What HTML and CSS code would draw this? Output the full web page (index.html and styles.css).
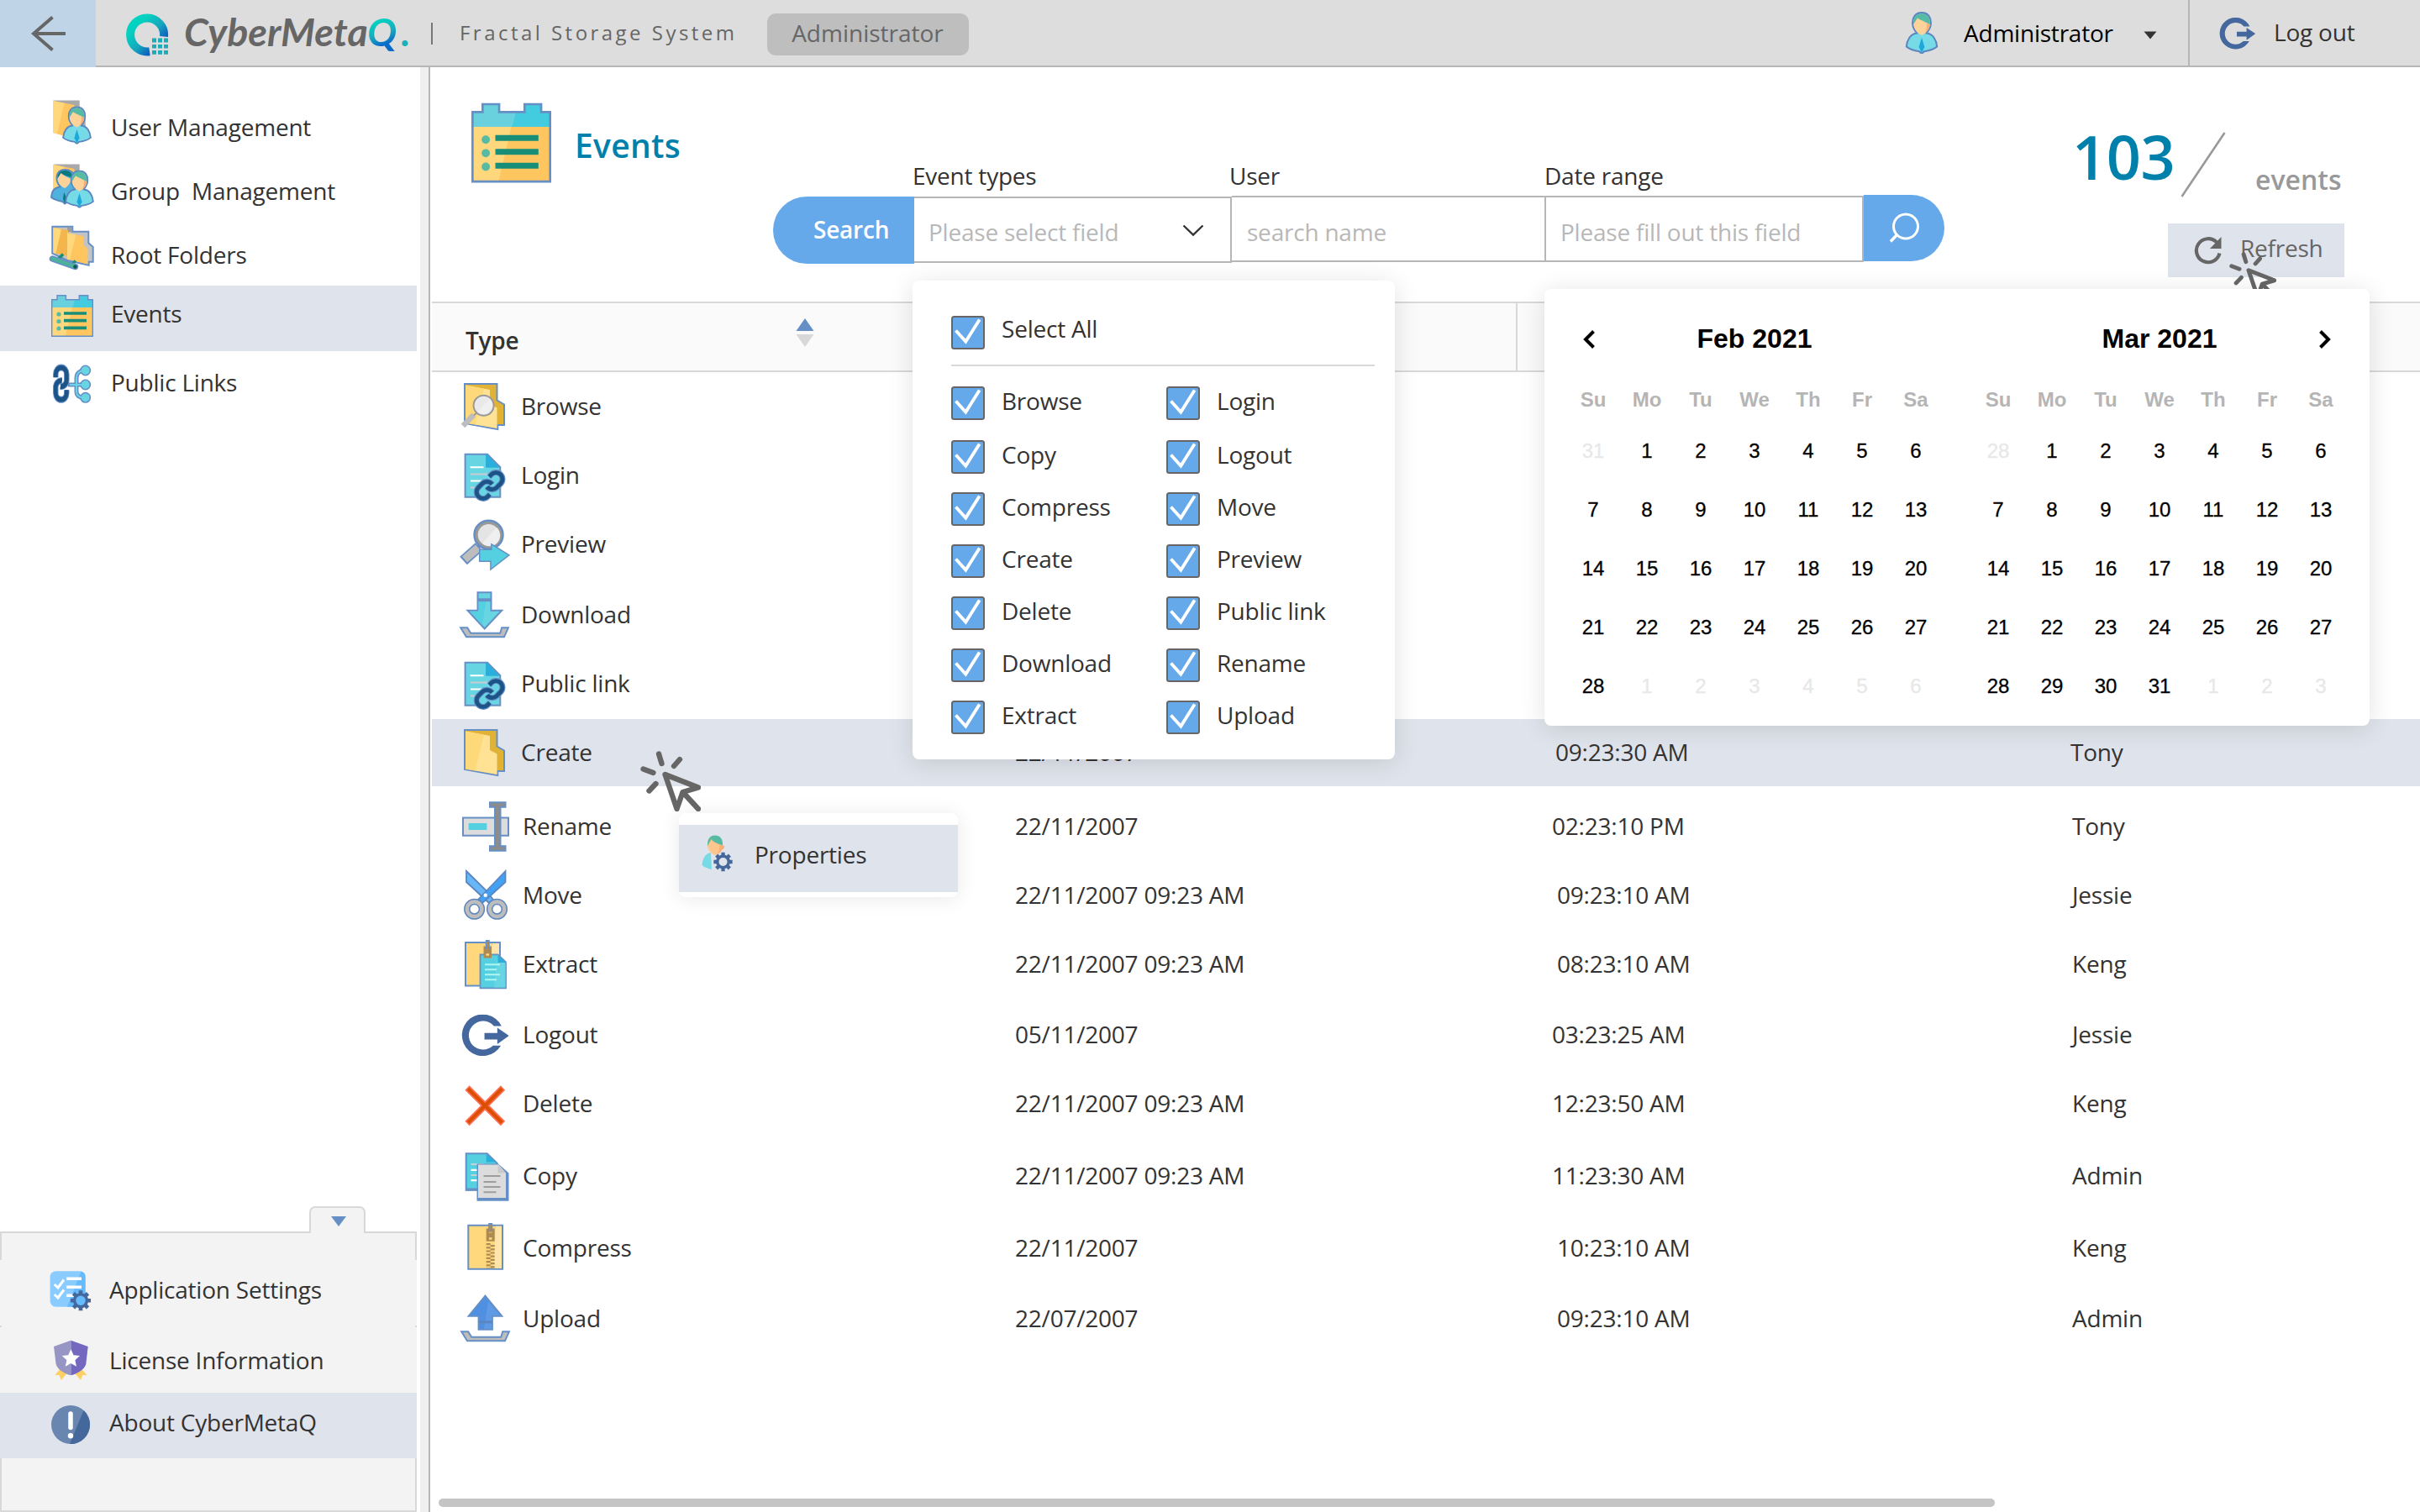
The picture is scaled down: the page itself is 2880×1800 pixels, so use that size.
FILE: index.html
```html
<!DOCTYPE html>
<html lang="en">
<head>
<meta charset="utf-8">
<title>CyberMetaQ - Events</title>
<link rel="stylesheet" href="styles.css">
</head>
<body>

<svg class="defs" aria-hidden="true">
  <defs>
    <linearGradient id="ring" x1="0" y1="0" x2="1" y2="1">
      <stop offset="0.2" stop-color="#04d2c0"/><stop offset="0.55" stop-color="#16a6bd"/><stop offset="0.8" stop-color="#0b62c0"/>
    </linearGradient>
    <path id="chain" d="M10 13a5 5 0 0 0 7.540.54l3-3a5 5 0 0 0-7.070-7.070l-1.720 1.710M14 11a5 5 0 0 0-7.540-.54l-3 3a5 5 0 0 0 7.070 7.070l1.710-1.710"/>
  </defs>
  <symbol id="i-events" viewBox="0 0 50 50">
    <path d="M.7 49.3V5.7H7V.8h10.4v4.9h15.9V.8h10.4v4.9h5.6v43.6z" fill="#ffc55f"/>
    <path d="M.7 49.3V15H25L17 49.3z" fill="#ffd77d"/>
    <path d="M.7 15V5.7H7V.8h10.4v4.9h15.9V.8h10.4v4.9h5.6V15z" fill="#43cbdf"/>
    <path d="M.7 15V5.7H7V.8h10.4v4.9H28L25.500 15z" fill="#69d1de"/>
    <path d="M.7 49.3V5.7H7V.8h10.4v4.9h15.9V.8h10.4v4.9h5.6v43.600z" fill="none" stroke="#668fc6" stroke-width="1.400"/>
    <g fill="#57bba4"><circle cx="9" cy="23" r="2.600"/><circle cx="9" cy="31.500" r="2.600"/><circle cx="9" cy="40" r="2.600"/></g>
    <path d="M15 22h27M15 30.700h27M15 39.300h27" stroke="#188e78" stroke-width="3.700"/>
  </symbol>
  <symbol id="i-folder" viewBox="0 0 64 64">
    <path d="M7 5h38.500v19.500l8.500 5v24.500h-7.700v5L7 52z" fill="#e0b236" stroke="#668fc6" stroke-width="2"/>
    <path d="M8 6.500l29 5.500v17l8.500 4.500V58L8 51.500z" fill="#ffe293"/>
    <path d="M8 6.500L30 10.700 19.500 53.500 8 51.500z" fill="#fed97a"/>
  </symbol>
  <symbol id="i-linkdoc" viewBox="0 0 64 64">
    <path d="M7.600 6.700H34l15.300 15.500v35.500H7.600z" fill="#68d5e3" stroke="#668fc6" stroke-width="2"/>
    <path d="M32 7.500v15.200h16.500L34 7.500z" fill="#2aaedb"/>
    <path d="M13.500 22.300h16M14 38.600h16" stroke="#fff" stroke-width="2"/>
    <path d="M14 30.400h24M14 46.600h9" stroke="#c9cdd2" stroke-width="2"/>
    <g fill="none" transform="translate(18 25.400) scale(1.550)" stroke-linecap="butt">
      <use href="#chain" stroke="#668fc6" stroke-width="4.500"/>
      <use href="#chain" stroke="#1d5487" stroke-width="3.100"/>
    </g>
  </symbol>
  <symbol id="i-person" viewBox="0 0 34 44">
    <path d="M17 1c-7 0-10 5.500-9.500 11.500C7.500 18 12 22 12 22.500 5 23 1.500 30 1 36.500 5 40 11 41 14.500 41.500L17 44l2.500-2.500C23 41 29 40 33 36.500 32.500 30 29 23 22 22.500c0-.5 4.500-4.500 4.500-10C27 6.500 24 1 17 1z" fill="#76dbe6" stroke="#5c86bf" stroke-width="1.800"/>
    <path d="M8.500 13C8 6 11.500 2 17 2s9 4 8.500 11z" fill="#57bba4"/>
    <path d="M12.500 6.500C16 9 22 11 25.500 13.500 25 19 20 23.500 17 24.500 14 23.500 8.500 19 8.500 13z" fill="#fdd39a"/>
    <path d="M22.500 12l3.200 1.500c-.5 4.500-3 7.500-5.700 9.500 2-3 2.500-7 2.500-11z" fill="#f8ae74"/>
    <path d="M17 27l3 10-3 6-3-6z" fill="#1da8dc"/>
  </symbol>
  <symbol id="i-exit" viewBox="0 0 56 50">
    <path d="M47.600 13.700A24.800 24.800 0 1 0 46.800 37H37.500A17 17 0 1 1 38.500 13.700z" fill="#44689d"/>
    <path d="M27.300 22h15.300v-6.200L56.500 25.300 42.600 35.300v-5.600H27.300z" fill="#44689d"/>
  </symbol>
  <symbol id="i-click" viewBox="0 0 72 72">
    <g fill="none" stroke="#666" stroke-width="6.300" stroke-linecap="round" stroke-linejoin="round">
      <path d="M22 3.500l3.500 11.500M47 10l-7 8M3.500 21.500L15.500 26M10.500 47.500l8-8.500"/>
      <path d="M29.500 28L69 43.500 50.500 49 43.500 69z"/><path d="M51 49.500L69 69"/>
    </g>
  </symbol>
  <symbol id="i-gear" viewBox="-14 -14 28 28">
    <g stroke="#45689c" stroke-width="5"><path d="M0-13V13M-13 0H13M-9.200-9.200L9.200 9.200M-9.200 9.200L9.200-9.200"/></g>
    <circle r="9.800" fill="#45689c"/>
  </symbol>
  <symbol id="i-check" viewBox="0 0 40 40">
    <rect x="1" y="1" width="38" height="38" rx="2.500" fill="#66a9eb" stroke="#666" stroke-width="2"/>
    <path d="M5.500 17.500L17.300 30.500 33.700 4.500" fill="none" stroke="#fff" stroke-width="3.800"/>
  </symbol>
</svg>

<header class="topbar">
  <a class="back"><svg width="42" height="42" viewBox="0 0 42 42"><path d="M25.500 1.500L3 21l22.500 19.500M3 21h38" fill="none" stroke="#666" stroke-width="4"/></svg></a>
  <div class="bar">
    <svg class="logo" width="51" height="51" viewBox="0 0 51 51">
      <path d="M28 45.200A20 20 0 1 1 45 27.500" fill="none" stroke="url(#ring)" stroke-width="10"/>
      <g fill="#1cabb9"><path d="M31 29.500h5v5h-5zM38 29.500h5v5h-5zM45 29.500h5v5h-5zM31 37h5v4.500h-5zM38 37h5v4.500h-5zM45 37h5v4.500h-5zM31 44h5v4.700h-5zM38 44h5v4.700h-5zM45 44h5v4.700h-5z"/></g>
    </svg>
    <div class="wordmark">CyberMeta<span class="q">Q</span><span class="dot">.</span></div>
    <i class="pipe"></i>
    <div class="tagline">Fractal Storage System</div>
    <div class="role">Administrator</div>
    <div class="account">
      <svg class="avatar" width="42" height="50"><use href="#i-person"/></svg>
      <span class="account-name">Administrator</span>
      <svg width="16" height="10" viewBox="0 0 16 10"><path d="M.5.500h15L8 9.500z" fill="#333"/></svg>
    </div>
    <div class="logout">
      <svg width="43" height="38"><use href="#i-exit"/></svg>
      <span>Log out</span>
    </div>
  </div>
</header>

<div class="body">
  <aside class="sidebar">
    <nav class="menu">
      <a class="item"><svg class="ico" viewBox="0 0 64 64">
        <path d="M7.300 4.500h31.400V20l7 5v14l-20 6z" fill="#a9a9a9"/><path d="M7.300 5L32.500 10v34L19 46.500 7.300 43z" fill="#ffc55f"/><path d="M7.300 5L20.500 7.700 12 44.500 7.300 43z" fill="#ffd77d"/>
        <use href="#i-person" x="18" y="11.500" width="35" height="45"/></svg><span>User Management</span></a>
      <a class="item"><svg class="ico" viewBox="0 0 64 64">
        <path d="M7.300 4.500h31.400V20z" fill="#a9a9a9"/><path d="M7.300 5L32.500 10v34L7.300 43z" fill="#ffc55f"/><path d="M7.300 5L20.500 7.700 12 44.500 7.300 43z" fill="#ffd77d"/>
        <path d="M21 11c-7 0-10 5-9.500 11 0 5 4 9 4 9.500C9 32 5.500 36.500 5 44c4 3 8 4 13.500 5l2.500 2.500 12-7V20c-1-6-6-9-12-9z" fill="#4fb2de" stroke="#5c86bf" stroke-width="1.800"/>
        <path d="M12.500 21c0-6 3-9 9-9s9 4 9 9l-14-5z" fill="#08797c"/><path d="M16.500 15c3 3 8 5 12 7-.5 5-4 9-7.500 11-4-2-8.500-6-8.500-11z" fill="#fdd39a"/>
        <path d="M20 38l4 8-3 5-2-5z" fill="#08797c"/>
        <use href="#i-person" x="21" y="11.500" width="35" height="45"/></svg><span class="pre">Group  Management</span></a>
      <a class="item"><svg class="ico" viewBox="0 0 64 64">
        <path d="M6.300 2.700h24v6h19v13.600l5.400 4.700v17.700h-5v4L24 43l-17.700-8.300z" fill="#c3c3c3" stroke="#668fc6" stroke-width="2"/>
        <path d="M24 3.700h5.500v5.500L24 9z" fill="#9d9d9d"/>
        <path d="M7.300 4L25 7v31L7.300 34z" fill="#f3b64d"/><path d="M7.300 4L17 6 10.500 34.700 7.300 34z" fill="#ffd77d"/>
        <path d="M24 10.300l19.300 4v10.400l5 4.300v18.500L24 41.500z" fill="#ffc55f"/><path d="M24 10.300l10.500 2.200L27 42.200l-3-.7z" fill="#ffd77d"/>
        <path d="M19 35.500L13 42M34 43.500L29 48" stroke="#188e78" stroke-width="3.500"/>
        <path d="M6.500 41L33.500 50.500" stroke="#668fc6" stroke-width="7.500" stroke-linecap="round"/><path d="M6.500 41L33.500 50.500" stroke="#4bb39b" stroke-width="4.500" stroke-linecap="round"/><circle cx="33.500" cy="50.500" r="2.300" fill="#0c5a55"/></svg><span>Root Folders</span></a>
      <a class="item active"><svg class="ico" viewBox="0 0 64 64"><use href="#i-events" x="5" y="14" width="50" height="50"/></svg><span>Events</span></a>
      <a class="item"><svg class="ico" viewBox="0 0 64 64">
        <g fill="none">
          <path d="M25 39h20M45 22c-7 0-10 4-10 9v16c0 5 3 7.500 10 7.500" stroke="#668fc6" stroke-width="5"/>
          <g fill="#68d5e3" stroke="#668fc6" stroke-width="1.600"><circle cx="45.700" cy="22" r="5.700"/><circle cx="45.700" cy="39" r="5.700"/><circle cx="45.700" cy="54.300" r="5.700"/></g>
          <path d="M27 39h18M45 22c-7 0-10 4-10 9v16c0 5 3 7.500 10 7.500" stroke="#68d5e3" stroke-width="2"/>
          <g transform="translate(16.800 37.700) scale(1.300 1.600) rotate(-45) translate(-12 -12)">
            <use href="#chain" stroke="#668fc6" stroke-width="5"/><use href="#chain" stroke="#1d5487" stroke-width="3.600"/>
          </g>
        </g></svg><span>Public Links</span></a>
    </nav>
    <div class="dock">
      <div class="dock-tab"><svg width="18" height="12" viewBox="0 0 18 12"><path d="M0 0h18L9 12z" fill="#668fc6"/></svg></div>
      <div class="dock-top"></div>
      <a class="dock-item"><svg class="ico" viewBox="0 0 64 64">
        <rect x="7.600" y="7.300" width="42" height="42.400" rx="7" fill="#8accff"/><path d="M44.500 7.400a7 7 0 0 1 5.100 7V42.700a7 7 0 0 1-7 7H28z" fill="#66bbff"/>
        <path d="M12.700 23l4.300 4 7-9.500M12.700 35l4.300 4 7-9.500" fill="none" stroke="#fff" stroke-width="3"/><path d="M27.200 16.300H45M27.200 26.300H45M27.200 36.300h9" stroke="#fff" stroke-width="3.400"/>
        <use href="#i-gear" x="31" y="29.300" width="26" height="26"/><circle cx="44" cy="42.300" r="5.700" fill="#66bbff"/></svg><span>Application Settings</span></a>
      <a class="dock-item"><svg class="ico" viewBox="0 0 64 64">
        <path d="M20.300 39l-7 8h5.200l2.200 6 7-8zM44.500 39l7 8h-5.200l-2.200 6-7-8z" fill="#fcd063"/>
        <path d="M32.400 5.700v41.600c-8-2-16-7-17.800-13.300L12 13z" fill="#9795c3"/><path d="M32.400 5.700v41.600c8-2 16-7 17.900-13.300L52.700 13z" fill="#7367c0"/>
        <path d="M32.400 16.300l3.200 7 7.400.8-5.600 5.200 1.600 7.500-6.600-3.800-6.600 3.800 1.600-7.500-5.600-5.200 7.400-.8z" fill="#fff"/></svg><span>License Information</span></a>
      <a class="dock-item active"><svg class="ico" viewBox="0 0 64 64">
        <circle cx="32" cy="32" r="23" fill="#6986b0"/><path d="M47.500 15A23 23 0 0 1 31 55z" fill="#45689c"/>
        <path d="M32 19v16.500" stroke="#fff" stroke-width="5.500" stroke-linecap="round"/><circle cx="32" cy="45.300" r="3.200" fill="#fff"/></svg><span>About CyberMetaQ</span></a>
      <div class="dock-bottom"></div>
    </div>
  </aside>
  <div class="splitter"></div>

  <main class="main">
    <section class="head">
      <div class="title">
        <svg width="95" height="96"><use href="#i-events"/></svg>
        <h1>Events</h1>
      </div>
      <div class="search">
        <div class="labels"><span></span><label>Event types</label><label>User</label><label>Date range</label></div>
        <div class="fields">
          <div class="search-label">Search</div>
          <div class="field select"><span>Please select field</span><svg width="26" height="15" viewBox="0 0 26 15"><path d="M1.500 1.500L13 12.500 24.500 1.500" fill="none" stroke="#333" stroke-width="2.400"/></svg></div>
          <div class="field name">search name</div>
          <div class="field range">Please fill out this field</div>
          <div class="go"><svg width="38" height="38" viewBox="0 0 38 38"><circle cx="21" cy="16.500" r="14.500" fill="none" stroke="#fff" stroke-width="3"/><path d="M10.500 26.500L3 34.500" stroke="#fff" stroke-width="3.400"/></svg></div>
        </div>
      </div>
      <div class="summary">
        <div class="count"><b>103</b><svg width="54" height="78" viewBox="0 0 54 78"><path d="M1.500 77L52.500 1" stroke="#999" stroke-width="2.600"/></svg><span>events</span></div>
        <div class="refresh"><svg width="34" height="34" viewBox="0 0 34 34"><path d="M27 7.500A14 14 0 1 0 30.500 20.500" fill="none" stroke="#666" stroke-width="4.200"/><path d="M32.500 1v14H19z" fill="#666"/></svg><span>Refresh</span></div>
      </div>
    </section>

    <section class="table">
      <div class="thead"><span class="th">Type</span>
        <svg class="sort" width="24" height="36" viewBox="0 0 24 36"><path d="M12 1l10.500 15H1.500z" fill="#668fc6"/><path d="M12 35L22.500 20H1.500z" fill="#d8d8d8"/></svg>
        <i class="col-line"></i></div>
      <div class="row"><svg class="ico" viewBox="0 0 64 64"><use href="#i-folder"/><path d="M22 38.500l-5 5" stroke="#999" stroke-width="2"/><path d="M17.500 42L5 55" stroke="#bdbdbd" stroke-width="6.500"/><circle cx="29.600" cy="30.700" r="12" fill="#e9e9e9" stroke="#999" stroke-width="2"/><path d="M37 22.500A11 11 0 0 1 22 38.500z" fill="#f0f0f0"/></svg><span>Browse</span></div>
      <div class="row"><svg class="ico"><use href="#i-linkdoc"/></svg><span>Login</span></div>
      <div class="row"><svg class="ico" viewBox="0 0 64 64"><path d="M26 32l-4 4.500" stroke="#668fc6" stroke-width="5"/><path d="M24 35L5.500 51.500" stroke="#668fc6" stroke-width="13"/><path d="M23 36L7 50" stroke="#bdbdbd" stroke-width="9.500"/><circle cx="35.500" cy="20.700" r="16.500" fill="#e4e4e4" stroke="#668fc6" stroke-width="3.500"/><circle cx="35.500" cy="20.700" r="14.300" fill="#e4e4e4" stroke="#999" stroke-width="3"/><path d="M45 12A12.700 12.700 0 0 1 28 31z" fill="#efefef"/><path d="M24.700 38.300h14.200v-6.500l21 13-22 17.200v-9.700H24.700z" fill="#55d0e0" stroke="#668fc6" stroke-width="1.500"/></svg><span>Preview</span></div>
      <div class="row"><svg class="ico" viewBox="0 0 64 64"><path d="M22.500 5.300h16v21.400h12.700L30.700 48.500 10.500 26.700h12z" fill="#68d5e3" stroke="#668fc6" stroke-width="2"/><path d="M23.500 15.500h9L28 44 13 27.700h10.500z" fill="#55d0e0"/><path d="M22.500 14.200h16" stroke="#668fc6" stroke-width="3.800"/><path d="M2.200 47.300h8l4 6.400h35l2-6.400h7.700L54 58.300H9z" fill="#bdbdbd" stroke="#668fc6" stroke-width="2"/></svg><span>Download</span></div>
      <div class="row"><svg class="ico"><use href="#i-linkdoc"/></svg><span>Public link</span></div>
      <div class="row active"><svg class="ico"><use href="#i-folder"/></svg><span>Create</span><span class="date">22/11/2007</span><span class="time">09:23:30 AM</span><span class="who">Tony</span></div>
      <div class="row low"><svg class="ico" viewBox="0 0 64 64"><path d="M5 21.500h54v21.300H5z" fill="#dcdcdc" stroke="#668fc6" stroke-width="2"/><path d="M11.700 28h21.700v8H11.700z" fill="#55d0e0"/><path d="M37 3.300h18.500v5.500h-6v46.500h6v5.500H37v-5.500h6V8.800h-6z" fill="#8c8c8c" stroke="#668fc6" stroke-width="2"/></svg><span>Rename</span><span class="date">22/11/2007</span><span class="time early">02:23:10 PM</span><span class="who">Tony</span></div>
      <div class="row low"><svg class="ico" viewBox="0 0 64 64"><path d="M9 3L33 26.500 41 37l-5 4L9 16z" fill="#67b6f8" stroke="#5c86bf" stroke-width="1.800"/><path d="M55.500 3L33 26.500 23 37l5 4L55.500 16z" fill="#43a1f4" stroke="#5c86bf" stroke-width="1.800"/><circle cx="31.700" cy="31.700" r="2.200" fill="#fff"/><g fill="none"><g stroke="#5c86bf" stroke-width="7.500"><circle cx="18.600" cy="48.300" r="8.800"/><circle cx="45.500" cy="48.300" r="8.800"/></g><g stroke="#bdbdbd" stroke-width="4.500"><circle cx="18.600" cy="48.300" r="8.800"/><circle cx="45.500" cy="48.300" r="8.800"/></g></g></svg><span>Move</span><span class="date">22/11/2007 09:23 AM</span><span class="time">09:23:10 AM</span><span class="who">Jessie</span></div>
      <div class="row low"><svg class="ico" viewBox="0 0 64 64"><path d="M8 6h41v51.500H8z" fill="#ffd77d" stroke="#668fc6" stroke-width="2"/><path d="M40 7h8v20H38z" fill="#ffe6a8"/><path d="M25.500 20.300h21L56 29.500v30.800H25.500z" fill="#55d0e0" stroke="#668fc6" stroke-width="1.800"/><path d="M46 21h1v8.500h8.500V59.500H42z" fill="#68d5e3"/><path d="M46.400 21v9H56z" fill="#2aaedb"/><path d="M29.500 10.500h9.500v14h-9.500z" fill="#ad8b53"/><path d="M34.300 3v11" stroke="#668fc6" stroke-width="5"/><path d="M34.300 5v10" stroke="#ad8b53" stroke-width="2.500"/><path d="M32.500 20.500h3.500" stroke="#ffd77d" stroke-width="2.500"/><path d="M31 32.300h18M31 38.300h14M31 44.300h18M31 50.300h14" stroke="#aef6f2" stroke-width="2"/></svg><span>Extract</span><span class="date">22/11/2007 09:23 AM</span><span class="time">08:23:10 AM</span><span class="who">Keng</span></div>
      <div class="row low"><svg class="ico" viewBox="0 0 64 64"><use href="#i-exit" x="4" y="7.700" width="56.500" height="50"/></svg><span>Logout</span><span class="date">05/11/2007</span><span class="time early">03:23:25 AM</span><span class="who">Jessie</span></div>
      <div class="row low"><svg class="ico" viewBox="0 0 64 64"><path d="M11 13l42.500 42.500M53.500 13L11 55.500" stroke="#ff6f57" stroke-width="7.500"/><path d="M12 14l40.500 40.500M52.500 14L12 54.500" stroke="#dd4f00" stroke-width="4.200"/></svg><span>Delete</span><span class="date">22/11/2007 09:23 AM</span><span class="time early">12:23:50 AM</span><span class="who">Keng</span></div>
      <div class="row low"><svg class="ico" viewBox="0 0 64 64"><path d="M9.700 5.300h25L46.700 17v31.700h-37z" fill="#55d0e0" stroke="#668fc6" stroke-width="2"/><path d="M33.700 6v9.500h12z" fill="#2aaedb"/><path d="M9 48h16" stroke="#668fc6" stroke-width="3"/><path d="M15.500 18h16M15.500 31h9" stroke="#c5d3d6" stroke-width="2"/><path d="M15.500 24.800h9M15.500 37.200h9" stroke="#fff" stroke-width="2.200"/><path d="M22.500 17.500H48L60.500 28.500v33.300h-38z" fill="#668fc6"/><path d="M24 18.500h24.500L57 28.500V58H24z" fill="#dcdcdc"/><path d="M47.500 18.500V28.500H57z" fill="#c9c9c9"/><path d="M30.500 32h20M30.500 39h15M30.500 45h20M30.500 51.300h15" stroke="#9d9d9d" stroke-width="2"/></svg><span>Copy</span><span class="date">22/11/2007 09:23 AM</span><span class="time early">11:23:30 AM</span><span class="who">Admin</span></div>
      <div class="row low"><svg class="ico" viewBox="0 0 64 64"><path d="M12.300 4.700h40.700v52H12.300z" fill="#ffd77d" stroke="#668fc6" stroke-width="2"/><path d="M45 5.700h7V55.700H42z" fill="#ffe6a8"/><path d="M33.700 8.500h3.300v5h3.400v-5h3.300v15.200h-10z" fill="#ad8b53"/><path d="M38.700 2v10" stroke="#668fc6" stroke-width="5"/><path d="M38.700 4v9" stroke="#ad8b53" stroke-width="2.400"/><path d="M37 20.500h3.500" stroke="#ffd77d" stroke-width="2.500"/><path d="M36.200 26v30" stroke="#ad8b53" stroke-width="5" stroke-dasharray="2.200 2"/><path d="M41.200 28v28" stroke="#ad8b53" stroke-width="5" stroke-dasharray="2.200 2"/></svg><span>Compress</span><span class="date">22/11/2007</span><span class="time">10:23:10 AM</span><span class="who">Keng</span></div>
      <div class="row low"><svg class="ico" viewBox="0 0 64 64"><path d="M32.500 4.500l20 24.300H41v16H24.500v-16h-12z" fill="#4f90e2" stroke="#668fc6" stroke-width="1.800"/><path d="M36 11l14 17H40.200v16H31z" fill="#6099e4"/><path d="M24.500 35.800H41" stroke="#5c86bf" stroke-width="3"/><path d="M4.200 47.300h8l4 6.400h35l2-6.400h7.700L56 58.300H11z" fill="#bdbdbd" stroke="#668fc6" stroke-width="2"/></svg><span>Upload</span><span class="date">22/07/2007</span><span class="time">09:23:10 AM</span><span class="who">Admin</span></div>
    </section>
    <div class="scroll-x"></div>
  </main>
</div>

<div class="popup types">
  <div class="opt all"><svg><use href="#i-check"/></svg><span>Select All</span></div>
  <div class="opts">
    <div class="opt"><svg><use href="#i-check"/></svg><span>Browse</span></div><div class="opt"><svg><use href="#i-check"/></svg><span>Login</span></div>
    <div class="opt"><svg><use href="#i-check"/></svg><span>Copy</span></div><div class="opt"><svg><use href="#i-check"/></svg><span>Logout</span></div>
    <div class="opt"><svg><use href="#i-check"/></svg><span>Compress</span></div><div class="opt"><svg><use href="#i-check"/></svg><span>Move</span></div>
    <div class="opt"><svg><use href="#i-check"/></svg><span>Create</span></div><div class="opt"><svg><use href="#i-check"/></svg><span>Preview</span></div>
    <div class="opt"><svg><use href="#i-check"/></svg><span>Delete</span></div><div class="opt"><svg><use href="#i-check"/></svg><span>Public link</span></div>
    <div class="opt"><svg><use href="#i-check"/></svg><span>Download</span></div><div class="opt"><svg><use href="#i-check"/></svg><span>Rename</span></div>
    <div class="opt"><svg><use href="#i-check"/></svg><span>Extract</span></div><div class="opt"><svg><use href="#i-check"/></svg><span>Upload</span></div>
  </div>
</div>

<svg class="cursor on-refresh"><use href="#i-click"/></svg>

<div class="popup calendar">
  <div class="month">
    <div class="month-head"><svg class="prev" width="18" height="24" viewBox="0 0 18 24"><path d="M14.500 2.500L5 12l9.500 9.500" fill="none" stroke="#000" stroke-width="4"/></svg>Feb 2021</div>
    <div class="grid week"><b>Su</b><b>Mo</b><b>Tu</b><b>We</b><b>Th</b><b>Fr</b><b>Sa</b></div>
    <div class="grid days">
      <s>31</s><i>1</i><i>2</i><i>3</i><i>4</i><i>5</i><i>6</i>
      <i>7</i><i>8</i><i>9</i><i>10</i><i>11</i><i>12</i><i>13</i>
      <i>14</i><i>15</i><i>16</i><i>17</i><i>18</i><i>19</i><i>20</i>
      <i>21</i><i>22</i><i>23</i><i>24</i><i>25</i><i>26</i><i>27</i>
      <i>28</i><s>1</s><s>2</s><s>3</s><s>4</s><s>5</s><s>6</s>
    </div>
  </div>
  <div class="month">
    <div class="month-head">Mar 2021<svg class="next" width="18" height="24" viewBox="0 0 18 24"><path d="M3.500 2.500L13 12l-9.500 9.500" fill="none" stroke="#000" stroke-width="4"/></svg></div>
    <div class="grid week"><b>Su</b><b>Mo</b><b>Tu</b><b>We</b><b>Th</b><b>Fr</b><b>Sa</b></div>
    <div class="grid days">
      <s>28</s><i>1</i><i>2</i><i>3</i><i>4</i><i>5</i><i>6</i>
      <i>7</i><i>8</i><i>9</i><i>10</i><i>11</i><i>12</i><i>13</i>
      <i>14</i><i>15</i><i>16</i><i>17</i><i>18</i><i>19</i><i>20</i>
      <i>21</i><i>22</i><i>23</i><i>24</i><i>25</i><i>26</i><i>27</i>
      <i>28</i><i>29</i><i>30</i><i>31</i><s>1</s><s>2</s><s>3</s>
    </div>
  </div>
</div>

<div class="popup context">
  <div class="context-item">
    <svg width="38" height="46" viewBox="0 0 38 46">
      <path d="M12 22C5 23 2 30 1.500 37c3 2.500 7 4 11.500 5z" fill="#76dbe6"/>
      <path d="M8 14C7.500 6 11 1.500 17 1.500S26.500 6 26 13z" fill="#57bba4"/>
      <path d="M12.500 6C15 10 22 12 28 14c0 3-1.500 4-3 4.500-1 3.500-5 5.500-8 6.500-4-1.500-8.500-6-9-11z" fill="#fdc68c"/>
      <path d="M22.500 12.500L28 14c0 3-1.500 4-3 4.500-1 3-3 4-5 5 2-3 2.500-7 2.500-11z" fill="#f8ae74"/>
      <use href="#i-gear" x="14.500" y="21" width="24" height="24"/><circle cx="26.500" cy="33" r="5" fill="#dfe3eb"/>
    </svg><span>Properties</span>
  </div>
</div>
<svg class="cursor on-row"><use href="#i-click"/></svg>
</body>
</html>
```
FILE: styles.css
```css
* { box-sizing: border-box; }
body {
  margin: 0;
  width: 2880px;
  height: 1800px;
  position: relative;
  overflow: hidden;
  background: #fff;
  color: #333;
  font: 28px/40px "Open Sans", "Noto Sans", sans-serif;
  letter-spacing: -.22px;
}
svg { display: block; flex: none; }
.defs { position: absolute; width: 0; height: 0; }
.ico { width: 64px; height: 64px; }
span, label { white-space: nowrap; }
.pre { white-space: pre; }

/* top bar */
.topbar { display: flex; height: 80px; }
.back { width: 114px; background: #c0d4e8; padding: 19px 0 0 37px; }
.bar {
  flex: 1;
  display: flex;
  background: #ddd;
  border-bottom: 2px solid #b6b6b6;
  line-height: 78px;
}
.logo { margin: 16px 0 0 36px; }
.wordmark {
  width: 294px;
  margin-left: 18px;
  font: italic 700 46.6px/74px Lato, sans-serif;
  letter-spacing: 0;
  color: #666;
  white-space: nowrap;
}
.wordmark .q {
  background: linear-gradient(160deg, #04d2c0 30%, #1aa9bd 55%, #0b6ac8 75%);
  -webkit-background-clip: text;
  background-clip: text;
  color: transparent;
}
.wordmark .dot { color: #1cb0b8; margin-left: 5px; }
.pipe { width: 2px; height: 26px; margin-top: 27px; background: #777; }
.tagline {
  width: 366px;
  margin-left: 32px;
  font-size: 24px;
  letter-spacing: 3.47px;
  color: #666;
  white-space: nowrap;
}
.role {
  width: 240px;
  height: 50px;
  margin-top: 16px;
  padding-right: 1px;
  border-radius: 10px;
  background: #bebebe;
  color: #666;
  font-weight: 500;
  letter-spacing: 0;
  line-height: 46px;
  text-align: center;
}
.account {
  display: flex;
  margin-left: auto;
  width: 340px;
  border-right: 2px solid #b6b6b6;
  color: #000;
}
.avatar { margin-top: 14px; }
.account-name { width: 214px; margin-left: 29px; }
.account-name + svg { margin-top: 37px; }
.logout { display: flex; width: 274px; padding-left: 35px; }
.logout svg { margin-top: 21px; }
.logout span { margin-left: 22px; line-height: 76px; }

/* sidebar */
.body { display: flex; height: 1720px; }
.sidebar { width: 500px; display: flex; flex-direction: column; }
.splitter { width: 12px; background: #efefef; border-right: 2px solid #b6b6b6; }
.menu { margin-top: 32px; width: 496px; }
.item, .dock-item { display: flex; }
.item { height: 76px; padding: 19px 0 0 56px; }
.item .ico { margin-top: -16px; }
.item span { margin-left: 12px; }
.item:nth-child(4) { height: 78px; padding-top: 13px; }
.item:nth-child(5) { height: 82px; padding-top: 17px; }

.dock { margin-top: auto; width: 496px; }
.dock-tab {
  position: relative;
  width: 67px;
  height: 32px;
  margin: 0 0 -2px 368px;
  border: 2px solid #d8d8d8;
  border-bottom: 0;
  border-radius: 7px 7px 0 0;
  background: #f3f3f3;
  padding: 10px 0 0 24px;
}
.dock-top { height: 34px; border: 2px solid #d8d8d8; border-bottom: 0; background: #f3f3f3; }
.dock-item { height: 78px; background: #f3f3f3; padding: 15px 0 0 52px; }
.dock-item .ico { margin-top: -9px; }
.dock-item span { margin-left: 14px; }
.dock-item:nth-child(4) {
  height: 80px;
  padding-top: 21px;
  background:
    linear-gradient(#d8d8d8, #d8d8d8) 0 0 / 2px 2px no-repeat,
    linear-gradient(#d8d8d8, #d8d8d8) 100% 0 / 2px 2px no-repeat,
    #f3f3f3;
}
.dock-bottom { height: 64px; border: 2px solid #d8d8d8; border-top: 0; background: #f3f3f3; }
.active { background: #dfe3eb; }

/* page head */
.main { width: 2368px; display: flex; flex-direction: column; }
.head { display: flex; height: 279px; }
.title { display: flex; width: 408px; padding: 42px 0 0 49px; }
.title h1 {
  margin: 24px 0 0 28px;
  font-size: 39px;
  line-height: 54px;
  font-weight: 600;
  letter-spacing: .3px;
  color: #0080ab;
}
.search { width: 1394px; padding-top: 109px; }
.labels { display: grid; grid-template-columns: 166px 377px 375px auto; }
.fields { display: flex; margin-top: 5px; }
.search-label {
  width: 168px;
  height: 80px;
  border-radius: 40px 0 0 40px;
  background: #66a9eb;
  color: #fff;
  font-weight: 600;
  line-height: 78px;
  padding-left: 48px;
}
.field {
  display: flex;
  height: 79px;
  border: 2px solid #b6b6b6;
  border-left: 0;
  color: #b8b8b8;
  line-height: 80px;
  white-space: nowrap;
}
.select { width: 378px; padding-left: 17px; }
.select span { width: 302px; }
.select svg { margin-top: 31px; }
.name, .range { margin-top: -1px; line-height: 82px; }
.name { width: 374px; padding-left: 18px; }
.range { width: 378px; padding-left: 17px; }
.go {
  width: 96px;
  height: 79px;
  margin-top: -2px;
  border-radius: 0 40px 40px 0;
  background: #66a9eb;
  padding: 21px 0 0 29px;
}
.summary { flex: 1; }
.count { display: flex; height: 186px; padding-left: 152px; color: #999; letter-spacing: 0; }
.count b { width: 129px; margin-top: 66px; font-size: 72px; line-height: 80px; font-weight: 600; letter-spacing: -.4px; color: #0080ab; }
.count svg { margin-top: 77px; }
.count span { margin: 112px 0 0 35px; font-size: 32px; line-height: 44px; font-weight: 600; }
.refresh {
  display: flex;
  width: 210px;
  height: 64px;
  margin-left: 266px;
  padding: 15px 0 0 31px;
  background: #dfe3eb;
  color: #666;
}
.refresh span { margin: -6px 0 0 21px; }

/* events table */
.table { margin-left: 2px; }
.thead {
  display: flex;
  height: 84px;
  border-top: 2px solid #d8d8d8;
  border-bottom: 2px solid #d8d8d8;
  background: #fafafa;
}
.th { width: 432px; padding: 24px 0 0 40px; font-weight: 600; }
.sort { margin-top: 17px; }
.col-line { width: 2px; margin-left: 834px; background: #d8d8d8; }
.row {
  display: grid;
  grid-template-columns: 74px 588px 643px 613px auto;
  grid-template-rows: 40px;
  padding: 19px 0 0 32px;
  height: 82px;
}
.row .ico { margin-top: -11px; }
.low { grid-template-columns: 76px 586px 645px 613px auto; }
.low .early { margin-left: -6px; }
.row:nth-child(2) { height: 83px; padding-top: 20px; }
.row:nth-child(5) { height: 84px; padding-top: 21px; }
.row:nth-child(7) { height: 80px; }
.row:nth-child(8) { height: 90px; padding-top: 27px; }
.row:nth-child(11) { height: 84px; padding-top: 21px; }
.row:nth-child(13) { height: 86px; padding-top: 23px; }
.row:nth-child(14) { height: 86px; padding-top: 23px; }
.row:nth-child(15) { height: 84px; padding-top: 21px; }
.row:nth-child(n+11) .ico { margin-left: -1px; }
.scroll-x { width: 1852px; height: 10px; margin: auto 0 6px 10px; border-radius: 5px; background: #c4c4c4; }

/* floating layers */
.popup { position: absolute; background: #fff; border-radius: 8px; box-shadow: 0 4px 30px rgba(0, 0, 0, .12); }
.types { left: 1086px; top: 334px; width: 574px; height: 570px; padding: 42px 24px 0 46px; }
.opt { display: flex; height: 62px; }
.opt svg { width: 40px; height: 40px; }
.opt span { margin: -3px 0 0 20px; }
.opt.all { height: 60px; border-bottom: 2px solid #d8d8d8; }
.opt.all span { margin-top: -5px; }
.opts { display: grid; grid-template-columns: 256px auto; grid-template-rows: 64px; margin-top: 24px; }

.calendar { left: 1838px; top: 344px; width: 982px; height: 520px; display: flex; gap: 34px; padding: 40px 26px 0; font-family: "Liberation Sans", Arial, sans-serif; letter-spacing: 0; }
.month { width: 448px; }
.month-head { position: relative; height: 72px; margin-top: -1px; padding-bottom: 1px; text-align: center; font-size: 32px; font-weight: 700; color: #000; }
.prev, .next { position: absolute; top: 9px; }
.prev { left: 18px; }
.next { right: 18px; }
.grid { display: grid; grid-template-columns: repeat(7, 64px); text-align: center; font-size: 24px; }
.week { height: 48px; margin-top: 1px; color: #b5b5b5; }
.days { grid-auto-rows: 70px; color: #000; padding-top: 13px; }
.days i { font-style: normal; -webkit-text-stroke: .3px #000; }
.days s { text-decoration: none; color: #e8e8e8; -webkit-text-stroke: .3px #e8e8e8; }

.context { left: 808px; top: 968px; width: 332px; height: 100px; padding-top: 14px; box-shadow: 0 2px 24px rgba(0, 0, 0, .09); }
.context-item { display: flex; height: 80px; background: #dfe3eb; padding: 11px 0 0 26px; }
.context-item span { margin: 4px 0 0 26px; }
.cursor { position: absolute; }
.on-row { left: 762px; top: 894px; width: 72px; height: 72px; }
.on-refresh { left: 2653px; top: 300px; width: 56px; height: 56px; }
```
